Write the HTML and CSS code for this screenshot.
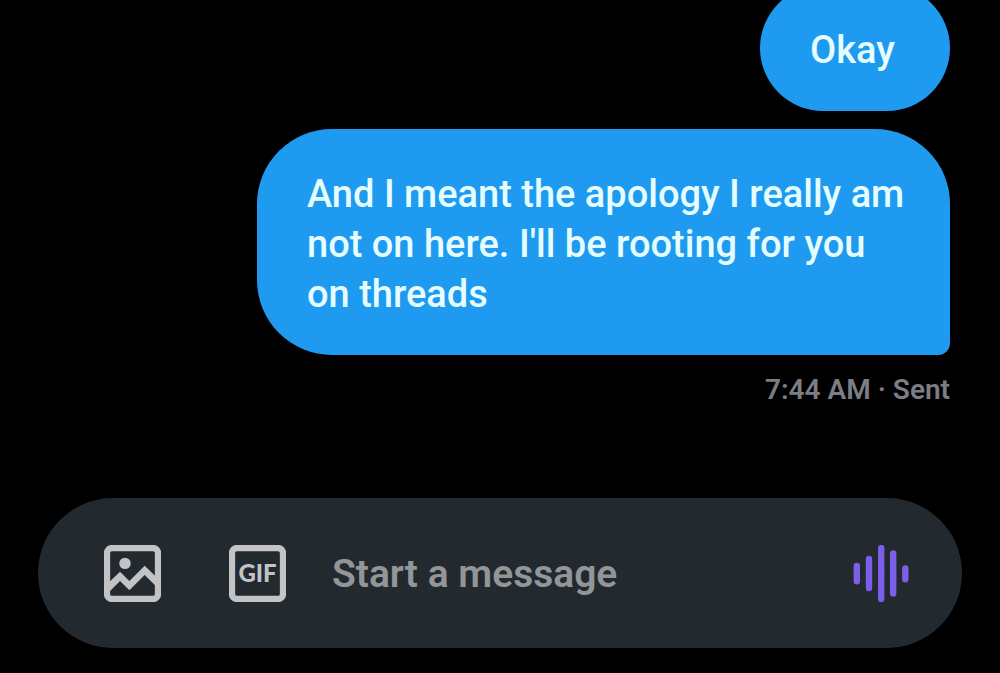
FILE: index.html
```html
<!DOCTYPE html>
<html lang="en">
<head>
  <meta charset="UTF-8" />
  <meta name="viewport" content="width=device-width, initial-scale=1.0" />
  <title>Messages</title>
  <link rel="stylesheet" href="styles.css">
</head>
<body>
  <main class="messages">
    <p class="bubble">Okay</p>
    <p class="bubble last">And I meant the apology I really am not on here. I'll be rooting for you on&nbsp;threads</p>
    <p class="status">7:44 AM · Sent</p>
  </main>

  <form class="composer">
    <button type="button" class="icon-btn" aria-label="Add photo">
      <svg viewBox="0 0 57 57">
        <rect x="3" y="3" width="51" height="51" rx="5" fill="none" stroke="currentColor" stroke-width="6.3" />
        <circle cx="21" cy="18.4" r="5.7" />
        <path d="M5 37.3 16 26.7l9.4 9.3 15.3-15.3L52 31.7v9.6L40.7 29.9 25.4 45.3 16 36 5 47z" />
      </svg>
    </button>
    <button type="button" class="icon-btn" aria-label="Add GIF">
      <svg viewBox="0 0 57 57">
        <rect x="3" y="3" width="51" height="51" rx="5" fill="none" stroke="currentColor" stroke-width="6.3" />
        <text class="gif" x="28.5" y="37" text-anchor="middle">GIF</text>
      </svg>
    </button>
    <input type="text" class="field" placeholder="Start a message" aria-label="Start a message" />
    <button type="button" class="icon-btn voice" aria-label="Record voice message">
      <svg viewBox="0 0 57 57">
        <path d="M3.8 21v15.2M16 14v29M28.2 3v51M40.2 8.4v40.2M52.3 23.4v10.8" fill="none" stroke="currentColor" stroke-width="6.4" stroke-linecap="round" />
      </svg>
    </button>
  </form>
</body>
</html>
```

FILE: styles.css
```css
* {
  box-sizing: border-box;
}
body {
  margin: 0;
  height: 100vh;
  overflow: hidden;
  display: flex;
  flex-direction: column;
  background: #000;
  font-family: Roboto, 'Liberation Sans', sans-serif;
}
.messages {
  flex: 1;
  min-height: 0;
  display: flex;
  flex-direction: column;
  align-items: flex-end;
  justify-content: flex-end;
  gap: 18px;
  padding: 0 50px 91px;
}
.bubble {
  flex-shrink: 0;
  max-width: 77%;
  min-width: 190px;
  margin: 0;
  padding: 40px 50px 36px;
  border-radius: 75px;
  background: #1e9bf0;
  color: #e6fdff;
  font-size: 38px;
  font-weight: 500;
  line-height: 50px;
}
.bubble.last {
  padding-right: 44px;
  border-bottom-right-radius: 12px;
}
.status {
  flex-shrink: 0;
  margin: 0;
  color: #7c7e85;
  font-size: 28px;
  font-weight: 600;
  line-height: 34px;
}
.composer {
  display: flex;
  align-items: center;
  height: 150px;
  margin: 0 38px 25px;
  padding: 0 52px 0 66px;
  border-radius: 75px;
  background: #22292f;
}
.icon-btn {
  flex-shrink: 0;
  width: 57px;
  height: 57px;
  margin-right: 68px;
  padding: 0;
  border: none;
  background: none;
  color: #c1c3c5;
  cursor: pointer;
}
.icon-btn svg {
  display: block;
  width: 100%;
  height: 100%;
  fill: currentColor;
}
.gif {
  font-family: Lato, sans-serif;
  font-size: 24px;
  font-weight: 900;
}
.field {
  flex: 1;
  min-width: 0;
  margin-left: -22px;
  padding: 2px 0 0;
  border: none;
  outline: none;
  background: none;
  color: #e6fdff;
  font-family: inherit;
  font-size: 39px;
  font-weight: 600;
  line-height: 50px;
}
.field::placeholder {
  color: #929699;
  opacity: 1;
}
.voice {
  margin-right: 0;
  color: #7b5fe9;
}
```
